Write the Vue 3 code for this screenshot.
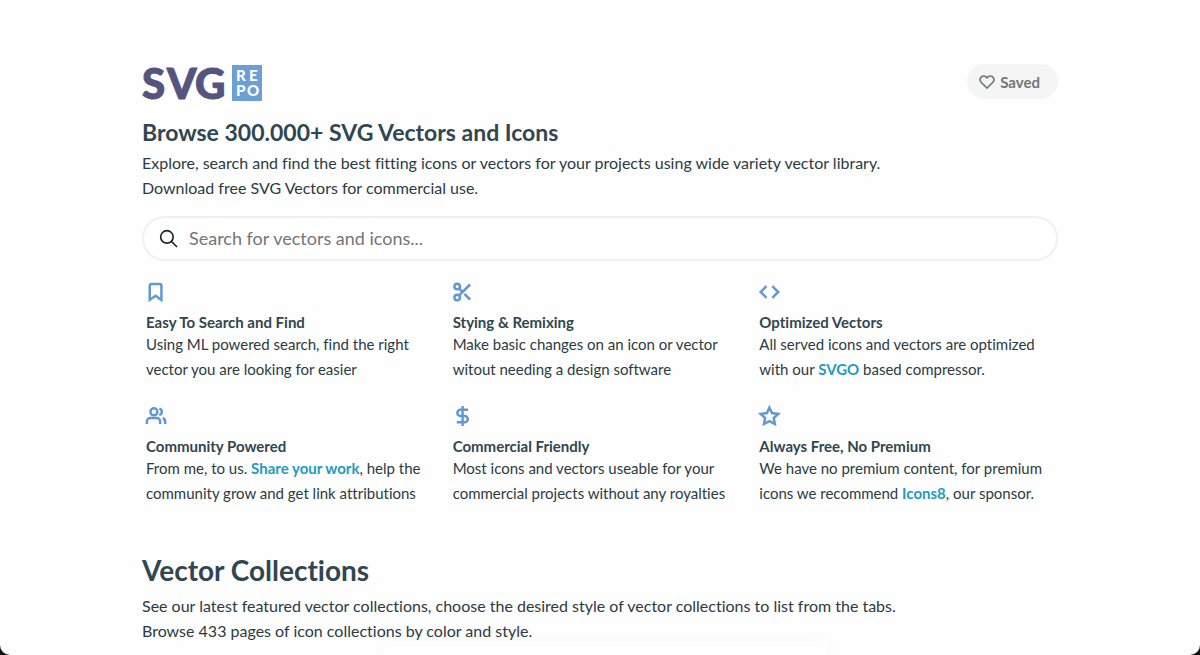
<script setup>
const features = [
  { icon: 'bookmark', title: 'Easy To Search and Find', lines: [['Using ML powered search, find the right'], ['vector you are looking for easier']] },
  { icon: 'scissors', title: 'Stying & Remixing', lines: [['Make basic changes on an icon or vector'], ['witout needing a design software']] },
  { icon: 'code', title: 'Optimized Vectors', lines: [['All served icons and vectors are optimized'], ['with our ', { label: 'SVGO' }, ' based compressor.']] },
  { icon: 'users', title: 'Community Powered', lines: [['From me, to us. ', { label: 'Share your work' }, ', help the'], ['community grow and get link attributions']] },
  { icon: 'dollar', title: 'Commercial Friendly', lines: [['Most icons and vectors useable for your'], ['commercial projects without any royalties']] },
  { icon: 'star', title: 'Always Free, No Premium', lines: [['We have no premium content, for premium'], ['icons we recommend ', { label: 'Icons8' }, ', our sponsor.']] },
]
</script>

<template>
  <div class="page">
    <main class="container">
      <header class="top">
        <a href="#" class="logo" aria-label="SVG Repo">
          <svg width="121" height="38" viewBox="0 0 121 38">
            <g class="logo-name">
              <text x="0" y="35">S</text>
              <text x="25" y="35">V</text>
              <text x="53" y="35">G</text>
            </g>
            <rect x="90" y="1" width="30" height="36" fill="#6c9fd6" />
            <g class="logo-tag">
              <text x="94" y="17">R</text>
              <text x="107" y="17">E</text>
              <text x="94" y="32">P</text>
              <text x="105" y="32">O</text>
            </g>
          </svg>
        </a>
        <button type="button" class="saved">
          <svg class="heart" viewBox="0 0 24 24"><path d="M20.84 4.61a5.5 5.5 0 0 0-7.78 0L12 5.67l-1.06-1.06a5.5 5.5 0 0 0-7.78 7.78L12 21.23l8.84-8.84a5.5 5.5 0 0 0 0-7.78z" /></svg>
          Saved
        </button>
      </header>

      <h1>Browse 300.000+ SVG Vectors and Icons</h1>
      <p class="intro">Explore, search and find the best fitting icons or vectors for your projects using wide variety vector library.<br>Download free SVG Vectors for commercial use.</p>

      <form class="search" role="search" @submit.prevent>
        <label for="query" aria-label="Search">
          <svg viewBox="0 0 24 24"><circle cx="9.5" cy="9.5" r="7.5" /><path d="M15 15L21 21" /></svg>
        </label>
        <input id="query" type="text" placeholder="Search for vectors and icons...">
      </form>

      <section class="features">
        <article v-for="f in features" :key="f.title">
          <svg class="icon" viewBox="0 0 24 24">
            <path v-if="f.icon === 'bookmark'" d="M18.500 21.500l-7-5-7 5V4.500a2 2 0 0 1 2-2h10a2 2 0 0 1 2 2z" />
            <g v-else-if="f.icon === 'scissors'">
              <circle cx="5" cy="5.500" r="3.300" /><circle cx="5" cy="18.500" r="3.300" />
              <path d="M20.500 3L7.400 16.100M13.700 14.200l6.800 6.800M7.400 7.900L11.500 12" />
            </g>
            <path v-else-if="f.icon === 'code'" d="M16 19l7-7-7-7M9 5l-7 7 7 7" />
            <g v-else-if="f.icon === 'users'">
              <path d="M17 21.500v-3a4 4 0 0 0-4-4H5a4 4 0 0 0-4 4v3M23 21.500v-3a4 4 0 0 0-3-3.870M16 3.130a4 4 0 0 1 0 7.750" />
              <circle cx="9.500" cy="7" r="4.200" />
            </g>
            <path v-else-if="f.icon === 'dollar'" d="M11.500 0v24M18 4.500H9a3.750 3.750 0 0 0 0 7.500h5a3.750 3.750 0 0 1 0 7.500H4.500" />
            <path v-else d="M12.500 2l3.100 6.500 7.400 1-5.300 4.900 1.300 7.100-6.500-3.300L6 21.500l1.300-7.100L2 9.500l7.400-1z" />
          </svg>
          <h3>{{ f.title }}</h3>
          <p>
            <template v-for="(line, i) in f.lines" :key="i">
              <br v-if="i">
              <template v-for="(part, j) in line" :key="j"><a v-if="part.label" href="#">{{ part.label }}</a><template v-else>{{ part }}</template></template>
            </template>
          </p>
        </article>
      </section>

      <section class="collections">
        <h2>Vector Collections</h2>
        <p>See our latest featured vector collections, choose the desired style of vector collections to list from the tabs.<br>Browse 433 pages of icon collections by color and style.</p>
      </section>
    </main>
  </div>
</template>

<style>
body {
  margin: 0;
  background: #111;
}
</style>

<style scoped>
.page {
  position: relative;
  box-sizing: border-box;
  height: 100vh;
  overflow: hidden;
  padding: 64px 24px 0;
  background: #fefefe;
  border-radius: 0 0 10px 10px;
  color: #2b3b42;
  font-family: Lato, "Open Sans", sans-serif;
  font-size: 16px;
  font-variant-ligatures: none;
  line-height: 25px;
}
/* soft shade rising from the bottom edge */
.page::after {
  content: "";
  position: absolute;
  left: 32%;
  right: 31%;
  bottom: -10px;
  height: 24px;
  box-shadow: 0 0 16px rgba(0, 0, 0, 0.03);
  pointer-events: none;
}
.container {
  max-width: 916px;
  margin: 0 auto;
}
h1, h2, h3, p {
  margin: 0;
}
h1, h2, h3 {
  color: #304650;
}
.top {
  display: flex;
  justify-content: space-between;
  align-items: flex-start;
}
.logo svg {
  display: block;
  overflow: visible;
}
.logo-name {
  fill: #54547f;
  stroke: #54547f;
  stroke-width: 1;
  font-size: 42px;
  font-weight: 900;
}
.logo-tag {
  fill: #fff;
  font-size: 15px;
  font-weight: 900;
}
.saved {
  display: flex;
  align-items: center;
  gap: 5px;
  height: 35px;
  padding: 0 18px 0 12px;
  border: 0;
  border-radius: 18px;
  background: #f5f5f5;
  color: #717778;
  font: bold 15px Lato, sans-serif;
}
.heart {
  width: 16px;
  height: 16px;
  fill: none;
  stroke: currentColor;
  stroke-width: 2.5;
}
h1 {
  margin-top: 15px;
  font-size: 23px;
  line-height: 30px;
}
.intro {
  margin-top: 3px;
}
.search {
  box-sizing: border-box;
  display: flex;
  align-items: center;
  gap: 10px;
  height: 45px;
  margin-top: 16px;
  padding: 0 15px;
  border: 2px solid #f0f0f0;
  border-radius: 23px;
  background: #fff;
}
.search label,
.search svg {
  display: block;
  width: 20px;
  height: 20px;
}
.search svg {
  overflow: visible;
  fill: none;
  stroke: #1c2329;
  stroke-width: 2;
  stroke-linecap: round;
}
.search input {
  flex: 1;
  min-width: 0;
  padding: 0 0 2px;
  border: 0;
  outline: 0;
  background: transparent;
  font: 18px Lato, sans-serif;
}
.search input::placeholder {
  color: #757575;
}
.features {
  display: grid;
  grid-template-columns: repeat(3, 1fr);
  gap: 24px 12px;
  margin-top: 21px;
  padding: 0 4px;
  font-size: 15px;
}
.icon {
  display: block;
  width: 20px;
  height: 20px;
  overflow: visible;
  fill: none;
  stroke: #6398d5;
  stroke-width: 3;
}
h3 {
  margin-top: 10px;
  font-size: 15px;
  line-height: 20px;
}
.features a {
  color: #1d9bc0;
  font-weight: bold;
  text-decoration: none;
}
.collections {
  margin-top: 46px;
}
h2 {
  font-size: 28px;
  line-height: 36px;
}
.collections p {
  margin-top: 5px;
}
</style>
